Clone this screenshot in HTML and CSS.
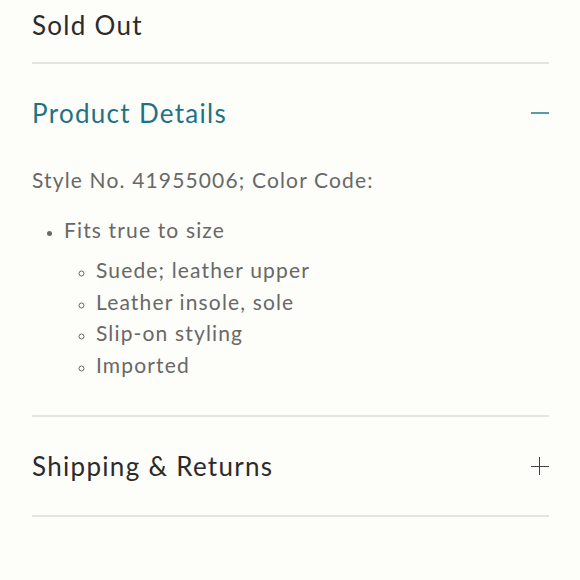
FILE: index.html
```html
<!DOCTYPE html>
<html>

<head>
  <meta charset="utf-8">
  <title>Product Details</title>

  <link rel="stylesheet" href="styles.css">

</head>

<body>

  <div class="details-panel">

    <div class="stock-status">Sold Out</div>

    <div class="accordion-item">
      <div class="accordion-header open">
        <span class="accordion-title">Product Details</span>
        <span class="accordion-icon minus"></span>
      </div>
      <div class="accordion-body">
        <p class="style-number">Style No. 41955006; Color Code:</p>
        <ul class="feature-list">
          <li>Fits true to size
            <ul class="sub-list">
              <li>Suede; leather upper</li>
              <li>Leather insole, sole</li>
              <li>Slip-on styling</li>
              <li>Imported</li>
            </ul>
          </li>
        </ul>
      </div>
    </div>

    <div class="accordion-item">
      <div class="accordion-header">
        <span class="accordion-title">Shipping &amp; Returns</span>
        <span class="accordion-icon plus"></span>
      </div>
    </div>

  </div>

</body>

</html>
```

FILE: styles.css
```css
body {
  margin: 0;
  background: #fdfdf9;
  font-family: Lato, "Noto Sans", sans-serif;
}

/* Holds the whole panel, padded from the window edges. */
.details-panel {
  padding: 0 31px 0 32px;
}

.stock-status {
  font-size: 26px;
  letter-spacing: 1.3px;
  color: #2b2b2b;
  height: 62px;
  line-height: 50px;
  border-bottom: 2px solid #e4e4e0;
}

.accordion-item {
  border-bottom: 2px solid #e4e4e0;
}

.accordion-header {
  display: flex;
  align-items: center;
  justify-content: space-between;
  height: 98px;
  font-size: 26px;
  letter-spacing: 1.3px;
  color: #2b2b2b;
}

.accordion-header.open {
  color: #1f7385;
}

/* Thin line icons drawn with pseudo elements. */
.accordion-icon {
  position: relative;
  width: 18px;
  height: 18px;
}

.accordion-icon::before,
.accordion-icon::after {
  content: "";
  position: absolute;
  background: currentColor;
}

.accordion-icon::before {
  left: 0;
  right: 0;
  top: 8px;
  height: 2px;
}

.accordion-icon.minus {
  color: #5a9aa8;
}

.accordion-icon.minus::after {
  display: none;
}

.accordion-icon.plus {
  color: #444;
}

.accordion-icon.plus::before {
  height: 1px;
  top: 9px;
}

.accordion-icon.plus::after {
  top: 0;
  bottom: 0;
  left: 8px;
  width: 1px;
}

.accordion-body {
  color: #686868;
  font-size: 21px;
  letter-spacing: 1.15px;
  padding: 2px 0 35px 0;
}

.style-number {
  margin: 0 0 18px 0;
  line-height: 32px;
}

.feature-list {
  margin: 0;
  padding-left: 32px;
  list-style: disc;
  line-height: 32px;
}

.feature-list li::marker {
  font-size: 16px;
}

.sub-list {
  margin: 8px 0 0 0;
  padding-left: 32px;
  list-style: circle;
  line-height: 31.5px;
}
```
